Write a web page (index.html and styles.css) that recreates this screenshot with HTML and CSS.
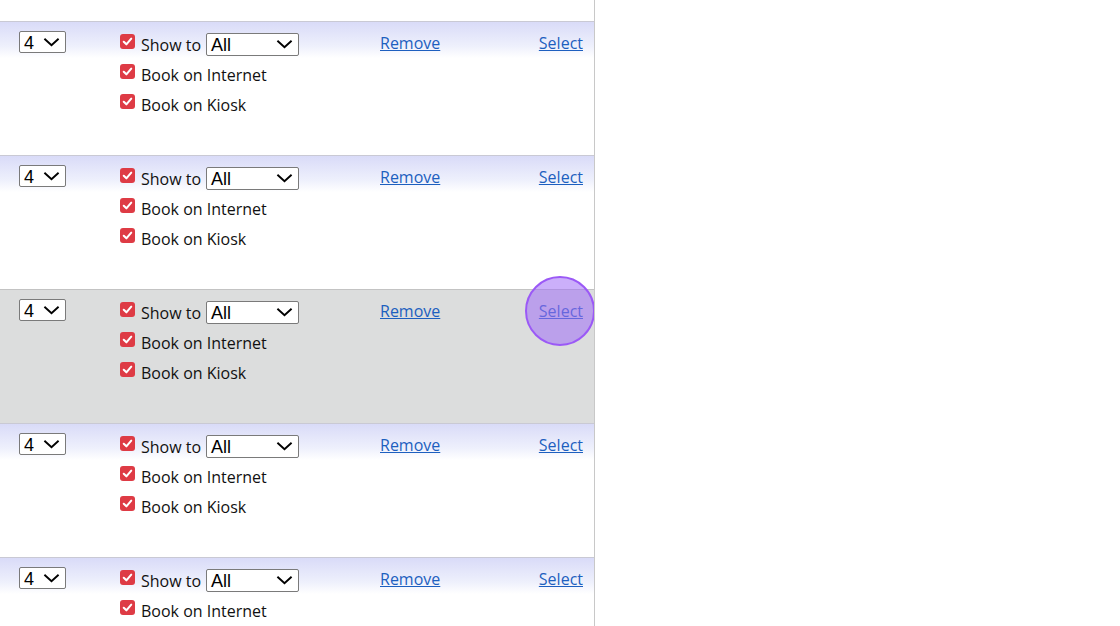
FILE: index.html
```html
<!DOCTYPE html>
<html>
<head>
<meta charset="utf-8">
<link rel="stylesheet" href="styles.css">
</head>
<body>
<div class="panel">
  <div class="row-tail"></div>

  <div class="row">
    <div class="cell-qty"><div class="sel sel-qty"><span>4</span><svg class="chev" viewBox="0 0 18 10"><path d="M1.5 1.5 L9 8.5 L16.5 1.5" fill="none" stroke="#000" stroke-width="2"/></svg></div></div>
    <div class="cell-opts">
      <div class="opt"><span class="cb"><svg viewBox="0 0 16 16"><path d="M4 8.3 L6.8 11 L12 5" fill="none" stroke="#fff" stroke-width="2.2" stroke-linecap="round" stroke-linejoin="round"/></svg></span><span class="lbl">Show to</span><div class="sel sel-all"><span>All</span><svg class="chev" viewBox="0 0 18 10"><path d="M1.5 1.5 L9 8.5 L16.5 1.5" fill="none" stroke="#000" stroke-width="2"/></svg></div></div>
      <div class="opt"><span class="cb"><svg viewBox="0 0 16 16"><path d="M4 8.3 L6.8 11 L12 5" fill="none" stroke="#fff" stroke-width="2.2" stroke-linecap="round" stroke-linejoin="round"/></svg></span><span class="lbl">Book on Internet</span></div>
      <div class="opt"><span class="cb"><svg viewBox="0 0 16 16"><path d="M4 8.3 L6.8 11 L12 5" fill="none" stroke="#fff" stroke-width="2.2" stroke-linecap="round" stroke-linejoin="round"/></svg></span><span class="lbl">Book on Kiosk</span></div>
    </div>
    <div class="cell-link"><a href="#">Remove</a></div>
    <div class="cell-select"><a href="#">Select</a></div>
  </div>

  <div class="row">
    <div class="cell-qty"><div class="sel sel-qty"><span>4</span><svg class="chev" viewBox="0 0 18 10"><path d="M1.5 1.5 L9 8.5 L16.5 1.5" fill="none" stroke="#000" stroke-width="2"/></svg></div></div>
    <div class="cell-opts">
      <div class="opt"><span class="cb"><svg viewBox="0 0 16 16"><path d="M4 8.3 L6.8 11 L12 5" fill="none" stroke="#fff" stroke-width="2.2" stroke-linecap="round" stroke-linejoin="round"/></svg></span><span class="lbl">Show to</span><div class="sel sel-all"><span>All</span><svg class="chev" viewBox="0 0 18 10"><path d="M1.5 1.5 L9 8.5 L16.5 1.5" fill="none" stroke="#000" stroke-width="2"/></svg></div></div>
      <div class="opt"><span class="cb"><svg viewBox="0 0 16 16"><path d="M4 8.3 L6.8 11 L12 5" fill="none" stroke="#fff" stroke-width="2.2" stroke-linecap="round" stroke-linejoin="round"/></svg></span><span class="lbl">Book on Internet</span></div>
      <div class="opt"><span class="cb"><svg viewBox="0 0 16 16"><path d="M4 8.3 L6.8 11 L12 5" fill="none" stroke="#fff" stroke-width="2.2" stroke-linecap="round" stroke-linejoin="round"/></svg></span><span class="lbl">Book on Kiosk</span></div>
    </div>
    <div class="cell-link"><a href="#">Remove</a></div>
    <div class="cell-select"><a href="#">Select</a></div>
  </div>

  <div class="row row-hover">
    <div class="cell-qty"><div class="sel sel-qty"><span>4</span><svg class="chev" viewBox="0 0 18 10"><path d="M1.5 1.5 L9 8.5 L16.5 1.5" fill="none" stroke="#000" stroke-width="2"/></svg></div></div>
    <div class="cell-opts">
      <div class="opt"><span class="cb"><svg viewBox="0 0 16 16"><path d="M4 8.3 L6.8 11 L12 5" fill="none" stroke="#fff" stroke-width="2.2" stroke-linecap="round" stroke-linejoin="round"/></svg></span><span class="lbl">Show to</span><div class="sel sel-all"><span>All</span><svg class="chev" viewBox="0 0 18 10"><path d="M1.5 1.5 L9 8.5 L16.5 1.5" fill="none" stroke="#000" stroke-width="2"/></svg></div></div>
      <div class="opt"><span class="cb"><svg viewBox="0 0 16 16"><path d="M4 8.3 L6.8 11 L12 5" fill="none" stroke="#fff" stroke-width="2.2" stroke-linecap="round" stroke-linejoin="round"/></svg></span><span class="lbl">Book on Internet</span></div>
      <div class="opt"><span class="cb"><svg viewBox="0 0 16 16"><path d="M4 8.3 L6.8 11 L12 5" fill="none" stroke="#fff" stroke-width="2.2" stroke-linecap="round" stroke-linejoin="round"/></svg></span><span class="lbl">Book on Kiosk</span></div>
    </div>
    <div class="cell-link"><a href="#">Remove</a></div>
    <div class="cell-select"><a href="#">Select</a><span class="pointer"></span></div>
  </div>

  <div class="row">
    <div class="cell-qty"><div class="sel sel-qty"><span>4</span><svg class="chev" viewBox="0 0 18 10"><path d="M1.5 1.5 L9 8.5 L16.5 1.5" fill="none" stroke="#000" stroke-width="2"/></svg></div></div>
    <div class="cell-opts">
      <div class="opt"><span class="cb"><svg viewBox="0 0 16 16"><path d="M4 8.3 L6.8 11 L12 5" fill="none" stroke="#fff" stroke-width="2.2" stroke-linecap="round" stroke-linejoin="round"/></svg></span><span class="lbl">Show to</span><div class="sel sel-all"><span>All</span><svg class="chev" viewBox="0 0 18 10"><path d="M1.5 1.5 L9 8.5 L16.5 1.5" fill="none" stroke="#000" stroke-width="2"/></svg></div></div>
      <div class="opt"><span class="cb"><svg viewBox="0 0 16 16"><path d="M4 8.3 L6.8 11 L12 5" fill="none" stroke="#fff" stroke-width="2.2" stroke-linecap="round" stroke-linejoin="round"/></svg></span><span class="lbl">Book on Internet</span></div>
      <div class="opt"><span class="cb"><svg viewBox="0 0 16 16"><path d="M4 8.3 L6.8 11 L12 5" fill="none" stroke="#fff" stroke-width="2.2" stroke-linecap="round" stroke-linejoin="round"/></svg></span><span class="lbl">Book on Kiosk</span></div>
    </div>
    <div class="cell-link"><a href="#">Remove</a></div>
    <div class="cell-select"><a href="#">Select</a></div>
  </div>

  <div class="row">
    <div class="cell-qty"><div class="sel sel-qty"><span>4</span><svg class="chev" viewBox="0 0 18 10"><path d="M1.5 1.5 L9 8.5 L16.5 1.5" fill="none" stroke="#000" stroke-width="2"/></svg></div></div>
    <div class="cell-opts">
      <div class="opt"><span class="cb"><svg viewBox="0 0 16 16"><path d="M4 8.3 L6.8 11 L12 5" fill="none" stroke="#fff" stroke-width="2.2" stroke-linecap="round" stroke-linejoin="round"/></svg></span><span class="lbl">Show to</span><div class="sel sel-all"><span>All</span><svg class="chev" viewBox="0 0 18 10"><path d="M1.5 1.5 L9 8.5 L16.5 1.5" fill="none" stroke="#000" stroke-width="2"/></svg></div></div>
      <div class="opt"><span class="cb"><svg viewBox="0 0 16 16"><path d="M4 8.3 L6.8 11 L12 5" fill="none" stroke="#fff" stroke-width="2.2" stroke-linecap="round" stroke-linejoin="round"/></svg></span><span class="lbl">Book on Internet</span></div>
    </div>
    <div class="cell-link"><a href="#">Remove</a></div>
    <div class="cell-select"><a href="#">Select</a></div>
  </div>
</div>
</body>
</html>
```
FILE: styles.css
```css
html, body {
  margin: 0;
  padding: 0;
  background: #fff;
  overflow: hidden;
}
body {
  font-family: "Open Sans", "Noto Sans", sans-serif;
  font-size: 16px;
  color: #111;
}
.panel {
  width: 594px;
  height: 626px;
  border-right: 1px solid #c8c8c8;
  overflow: hidden;
}
.row-tail {
  height: 21px;
}
.row {
  height: 133px;
  border-top: 1px solid #c9c9d4;
  display: grid;
  grid-template-columns: 120px 260px 1fr auto;
  align-items: start;
  background: linear-gradient(to bottom, #d9dbf8 0px, #eef0fc 24px, #ffffff 36px, #ffffff 100%);
  padding-right: 11px;
  box-sizing: content-box;
}
.row-hover {
  background: #dcdddd;
  border-top-color: #c3c3c3;
}
.cell-qty {
  padding: 9px 0 0 19px;
}
.sel {
  display: flex;
  align-items: center;
  justify-content: space-between;
  background: #fff;
  border: 1px solid #7a7a7a;
  border-radius: 2px;
  box-sizing: border-box;
  font-family: "Liberation Sans", Arial, sans-serif;
  font-size: 18px;
  line-height: 20px;
  color: #000;
}
.sel span {
  padding-top: 1px;
}
.sel-qty {
  width: 47px;
  height: 22px;
  padding: 0 5px 0 4px;
}
.sel-all {
  width: 93px;
  height: 23px;
  padding: 0 5px 0 4px;
  margin-left: 5px;
}
.chev {
  width: 17px;
  height: 10px;
}
.cell-opts {
  padding-top: 7px;
  display: flex;
  flex-direction: column;
}
.opt {
  display: flex;
  align-items: center;
  height: 30px;
}
.cb {
  width: 15px;
  height: 15px;
  border-radius: 3px;
  background: #de3b45;
  display: inline-flex;
  margin-right: 6px;
  margin-top: -6px;
}
.cb svg {
  width: 15px;
  height: 15px;
}
.lbl {
  line-height: 30px;
  padding-top: 1px;
}
.cell-link, .cell-select {
  padding-top: 10px;
  font-size: 16px;
  line-height: 22px;
}
.cell-select {
  position: relative;
}
a {
  color: #1d5fbf;
  text-decoration: underline;
}
.pointer {
  position: absolute;
  left: 50%;
  top: 21px;
  width: 70px;
  height: 70px;
  margin: -35px 0 0 -36px;
  border-radius: 50%;
  border: 2px solid #9b59f6;
  background: rgba(160, 110, 245, 0.55);
  box-sizing: border-box;
}
```
